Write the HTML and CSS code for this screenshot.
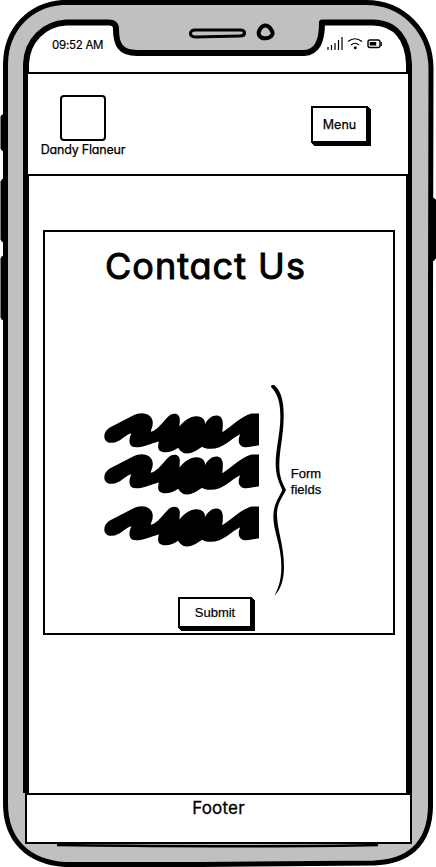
FILE: index.html
```html
<!DOCTYPE html>
<html lang="en">
<head>
<meta charset="utf-8">
<title>Contact Us</title>
<link rel="stylesheet" href="styles.css">
</head>
<body>
<div class="phone">
  <svg class="frame" viewBox="0 0 436 867" aria-hidden="true">
    <path class="key" d="M4 116L2.500 117V148L4 150M4 180L2.500 182V239L4 241M4 257L2.500 259V317L4 319"/>
    <path class="key" d="M432 199L434.500 201V257L432 260"/>
    <path class="shell" d="M62 2.500H366C403 2.500 430.500 31 431 68L430.500 300V806C430 846 406 862 374 863L200 864.500H65C29 862 5 841 5.500 802V64C6 29 30 5 62 2.500Z"/>
    <path class="glass" d="M26 793V64C27 40 44 24 66 22.500H108Q116 22 116 29C116 44 120 53 137 53H304C317 52 322 42 322 22.500H373C396 23 408 39 409 64V793"/>
    <path class="speaker" d="M195 30L240 30C246 30 246 36 240 36L195 37C189 37 189 30 195 30Z"/>
    <path class="lens" d="M265 25.500C269 25 273 31 272.500 34C271 39 262 39.500 259.500 36C257 32 261 26 265 25.500Z"/>
    <path class="edge" d="M57 845C130 846 300 847 378 845"/>
  </svg>
  <div class="screen">
    <div class="status">
      <span class="time">09:52 AM</span>
      <svg class="indicators" viewBox="0 0 56 14" aria-hidden="true">
        <path d="M1 10V13M4.500 8V13M8 6V13M11.500 3V13M15 0V13"/>
        <path d="M21 4.500Q28 -1 35 4.500M24 8Q28 4.500 32 8"/>
        <circle cx="28.300" cy="10.800" r="1.500"/>
        <rect class="cell" x="41" y="3" width="12" height="7.500" rx="2"/>
        <path d="M54.300 5V9"/>
        <rect x="42.700" y="5" width="6.500" height="3.500"/>
      </svg>
    </div>
    <header class="header">
      <div class="brand"><div class="logo"></div><span class="name">Dandy Flaneur</span></div>
      <button class="button menu">Menu</button>
    </header>
    <main class="content">
      <section class="card">
        <h1>Contact Us</h1>
        <div class="form">
          <div class="fields">
            <svg class="scribble" viewBox="28 38 464 122"><path id="scribble" d="M50 127C24 127 22 97 44 82L115 45C145 30 175 42 174 68C174 80 168 88 168 94C190 88 205 62 218 50C232 35 255 36 255 58L254 78C268 60 290 45 310 48C325 50 332 60 330 72C340 48 365 38 378 50C386 60 384 78 382 95C405 82 440 46 470 39H492V134C470 138 450 144 440 137C428 130 430 112 436 101C410 112 385 146 345 145C335 145 328 143 322 139C305 150 290 160 275 159C262 159 255 150 250 142C235 155 205 160 194 150C188 143 190 133 192 122C170 130 130 146 112 138C100 130 104 110 110 98C90 102 80 125 50 127Z"/></svg>
            <svg class="scribble" viewBox="28 38 464 122"><use href="#scribble"/></svg>
            <svg class="scribble last" viewBox="28 38 464 122"><use href="#scribble"/></svg>
          </div>
          <svg class="brace" viewBox="33 30 45 633"><path d="M33 36C33 28 43 28 48 35C63 50 72 80 71 125C71 180 57 230 58 275C58 305 68 325 78 345C68 365 52 385 51 415C50 460 72 510 72 575C72 620 60 645 43 662C55 640 64 615 64 575C64 510 40 470 40 425C40 390 55 370 67 346C56 320 47 300 47 265C47 220 61 175 61 125C61 80 52 55 33 36Z"/></svg>
          <p class="note">Form<br>fields</p>
        </div>
        <button class="button submit">Submit</button>
      </section>
    </main>
    <footer class="footer">Footer</footer>
  </div>
</div>
</body>
</html>
```
FILE: styles.css
```css
* { box-sizing: border-box; }
body { margin: 0; background: #fff; color: #000; font-family: Inter, "Liberation Sans", sans-serif; font-feature-settings: "cv11" 1; }
.phone { position: relative; width: 436px; height: 867px; overflow: hidden; }
.frame { position: absolute; inset: 0; width: 436px; height: 867px; fill: none; stroke: #000; stroke-linejoin: round; }
.key { stroke-width: 4; }
.shell { fill: #c0c0c0; stroke-width: 5; }
.glass { fill: #fff; stroke-width: 6; }
.speaker { stroke-width: 3.200; }
.lens { stroke-width: 4; }
.edge { stroke-width: 2.500; }
.screen { position: relative; display: flex; flex-direction: column; width: 387px; height: 844px; margin-left: 25px; }
.status { display: flex; justify-content: space-between; height: 72px; padding: 37px 29px 0 27px; }
.time { font-size: 11.500px; line-height: 16px; letter-spacing: -.25px; -webkit-text-stroke: .2px #000; }
.indicators { width: 56px; height: 14px; fill: none; stroke: #000; stroke-width: 1.200; }
.indicators circle, .indicators rect { fill: #000; stroke: none; }
.indicators .cell { fill: none; stroke: #000; stroke-width: 1.400; }
.header { display: flex; justify-content: space-between; align-items: flex-start; height: 104px; width: 384px; margin-left: 1px; padding: 21px 40px 0 10px; background: #fff; border: 2px solid #000; }
.brand { display: flex; flex-direction: column; align-items: center; width: 90px; }
.logo { width: 46px; height: 46px; border: 2px solid #000; border-radius: 4px; }
.name { margin-top: 1px; font-size: 12.500px; line-height: 16px; white-space: nowrap; letter-spacing: -.2px; -webkit-text-stroke: .25px #000; }
.button { padding: 0; border: 2px solid #000; background: #fff; color: #000; font-feature-settings: inherit; box-shadow: 1px 1px 0 0 #000, 2px 2px 0 0 #000, 3px 3px 0 0 #000; }
.menu { width: 57px; height: 37px; margin-top: 11px; font: 12.500px/16px Inter, "Liberation Sans", sans-serif; -webkit-text-stroke: .25px #000; }
.content { flex: 1; padding: 54px 0 0 18px; }
.card { display: flex; flex-direction: column; width: 352px; height: 405px; border: 2px solid #000; }
h1 { margin: 10px 0 0 60px; font-size: 36px; line-height: 48px; font-weight: 400; letter-spacing: 1px; -webkit-text-stroke: 1px #000; white-space: nowrap; }
.form { display: flex; align-items: flex-start; margin: 95px 0 0 59px; height: 212px; }
.fields { width: 155px; padding-top: 28px; }
.scribble { display: block; width: 155px; height: 41px; overflow: visible; }
.scribble.last { margin-top: 11px; }
.brace { width: 15px; height: 211px; margin-left: 12px; }
.note { margin: 81px 0 0 1px; width: 38px; text-align: center; font: 13px/16px "Liberation Sans", sans-serif; -webkit-text-stroke: .25px #000; }
.submit { width: 74px; height: 31px; margin-left: 133px; font: 13px/16px "Liberation Sans", sans-serif; -webkit-text-stroke: .2px #000; }
.footer { height: 51px; padding-top: 3px; background: #fff; border: 2px solid #000; text-align: center; font-size: 17px; line-height: 20px; letter-spacing: .2px; -webkit-text-stroke: .3px #000; }
```
